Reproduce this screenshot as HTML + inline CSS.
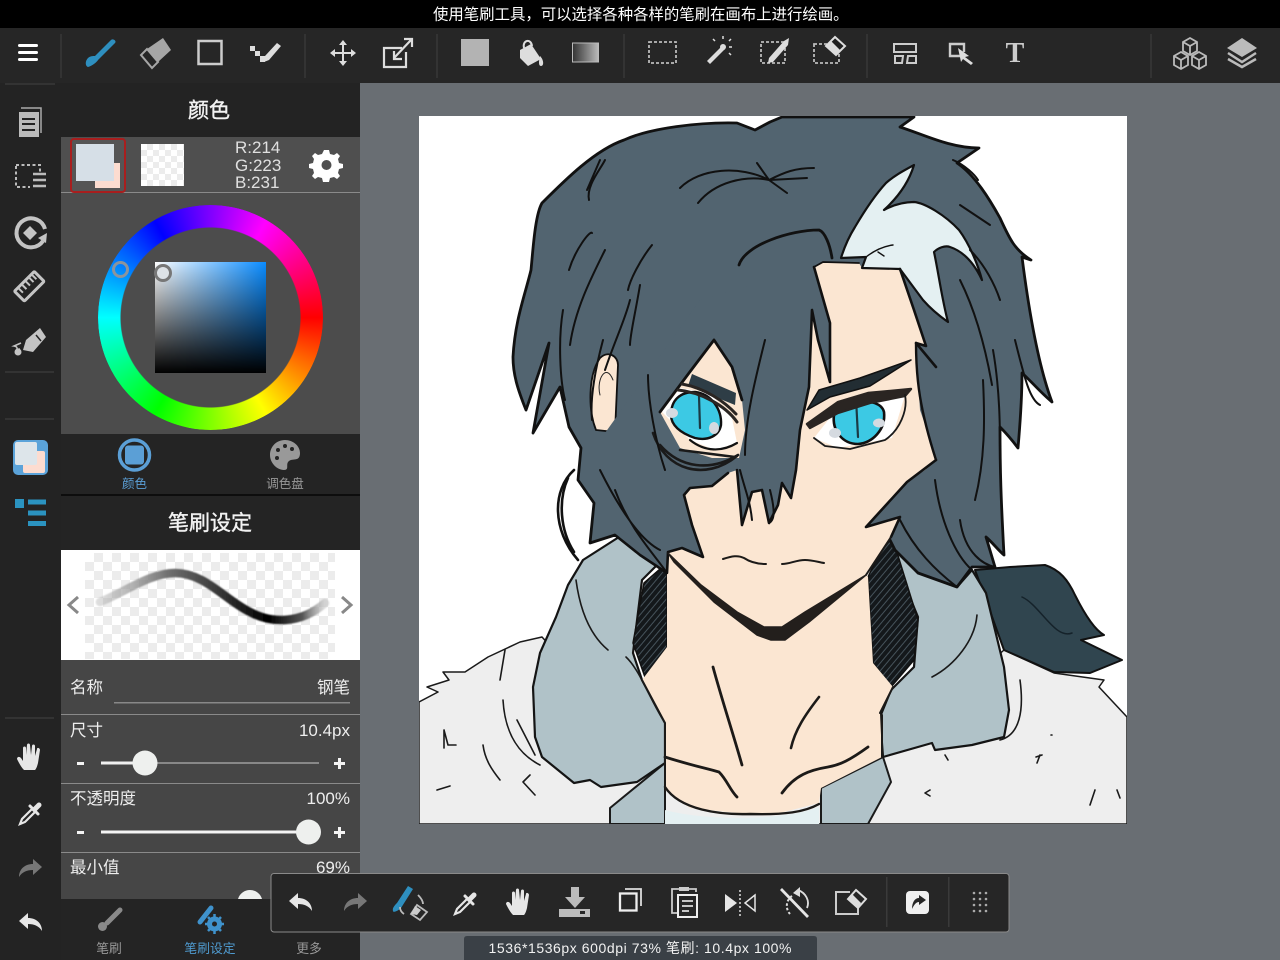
<!DOCTYPE html>
<html lang="zh">
<head>
<meta charset="utf-8">
<title>MediBang</title>
<style>
html,body{margin:0;padding:0;background:#686d72}
body{width:1280px;height:960px;overflow:hidden;position:relative;font-family:"Liberation Sans","Noto Sans CJK SC",sans-serif}
.a{position:absolute}
.check{background-color:#fff;background-image:linear-gradient(45deg,#ececec 25%,transparent 25%,transparent 75%,#ececec 75%),linear-gradient(45deg,#ececec 25%,transparent 25%,transparent 75%,#ececec 75%);background-size:18px 18px;background-position:0 0,9px 9px}
svg{position:absolute;left:0;top:0}
</style>
</head>
<body>
<div class="a" style="left:0;top:0;width:1280px;height:28px;background:#000"></div>
<div class="a" style="left:0;top:28px;width:1280px;height:55px;background:#262626"></div>
<div class="a" style="left:0;top:83px;width:61px;height:877px;background:#232323"></div>
<div class="a" style="left:360px;top:83px;width:920px;height:877px;background:#696e73"></div>

<div class="a" style="left:61px;top:83px;width:299px;height:54px;background:#232323"></div>
<div class="a" style="left:61px;top:137px;width:299px;height:55px;background:#4f4f4f"></div>
<div class="a" style="left:61px;top:192px;width:299px;height:1px;background:#8a8a8a"></div>
<div class="a" style="left:61px;top:193px;width:299px;height:241px;background:#4c4c4c"></div>
<div class="a" style="left:61px;top:434px;width:299px;height:60px;background:#242424"></div>
<div class="a" style="left:61px;top:494px;width:299px;height:2px;background:#0d0d0d"></div>
<div class="a" style="left:61px;top:496px;width:299px;height:54px;background:#242424"></div>
<div class="a" style="left:61px;top:550px;width:299px;height:110px;background:#fff"></div>
<div class="a check" style="left:85px;top:553px;width:250px;height:106px"></div>
<div class="a" style="left:61px;top:660px;width:299px;height:239px;background:#464646"></div>
<div class="a" style="left:61px;top:899px;width:299px;height:61px;background:#242424"></div>

<div class="a" style="left:97.5px;top:205px;width:225px;height:225px;border-radius:50%;background:conic-gradient(from 90deg,#f00,#ff0,#0f0,#0ff,#00f,#f0f,#f00);-webkit-mask:radial-gradient(circle,transparent 89.5px,#000 90.5px);mask:radial-gradient(circle,transparent 89.5px,#000 90.5px)"></div>
<div class="a" style="left:155px;top:262px;width:111px;height:111px;background:linear-gradient(to top,#000,rgba(0,0,0,0)),linear-gradient(to right,#fff,#0a8cff)"></div>
<div class="a" style="left:112px;top:261px;width:11px;height:11px;border:3px solid #8c949c;border-radius:50%"></div>
<div class="a" style="left:154px;top:264px;width:12px;height:12px;border:3.5px solid #777;border-radius:50%;background:#dde2e6"></div>

<div class="a check" style="left:141px;top:144px;width:43px;height:42px;background-size:12px 12px;background-position:0 0,6px 6px"></div>
<div class="a" style="left:70px;top:138px;width:52px;height:51px;border:2.5px solid #a81e1e;border-radius:4px;background:#555"></div>
<div class="a" style="left:95px;top:163px;width:25px;height:25px;background:#fcdcd0"></div>
<div class="a" style="left:76px;top:144px;width:38px;height:37px;background:#d6dfe7"></div>

<svg width="1280" height="960" viewBox="0 0 1280 960">
<defs>
<clipPath id="cv"><rect x="419" y="116" width="708" height="708"/></clipPath>
<pattern id="hatch" width="5" height="5" patternUnits="userSpaceOnUse" patternTransform="rotate(-50)"><rect width="5" height="5" fill="#14181b"/><rect width="5" height="1" fill="#46535b"/></pattern>
<linearGradient id="stroke" x1="100" x2="325" y1="0" y2="0" gradientUnits="userSpaceOnUse"><stop offset="0" stop-color="#aaa" stop-opacity=".4"/><stop offset=".3" stop-color="#707070"/><stop offset=".75" stop-color="#000"/><stop offset=".9" stop-color="#555"/><stop offset="1" stop-color="#bbb" stop-opacity=".5"/></linearGradient>
<filter id="soft" x="-10%" y="-30%" width="120%" height="160%"><feGaussianBlur stdDeviation="0.8"/></filter>
</defs>
<rect x="419" y="116" width="708" height="708" fill="#fff"/>
<g clip-path="url(#cv)" stroke-linejoin="round" stroke-linecap="round">
<!-- fur -->
<path d="M419 702L438 692 427 687 449 680 443 672 465 672 488 657 520 642 542 637 600 700 700 800 880 760 1004 650 1054 673 1104 680 1099 687 1127 717V824H419Z" fill="#eeeeee" stroke="#1a1a1a" stroke-width="1.5"/>
<!-- back dark hair -->
<path d="M975 570L1010 567 1045 565C1060 570 1068 580 1075 595 1085 615 1095 630 1104 635L1081 640 1122 660 1090 673 1054 672 1004 650 986 600Z" fill="#30454f" stroke="#111" stroke-width="2"/>
<path d="M1022 597C1040 605 1055 640 1072 633" fill="none" stroke="#15222a" stroke-width="1.5"/>
<!-- coat pieces -->
<path d="M665 763L610 808V824H665Z" fill="#b0c2c8" stroke="#1a1a1a" stroke-width="2"/>
<path d="M883 757L821 788V824H868L891 782Z" fill="#b0c2c8" stroke="#1a1a1a" stroke-width="2"/>
<path d="M665 810C700 820 780 822 819 807V824H665Z" fill="#e4f0f2"/>
<!-- collars -->
<path d="M619 537L583 560 568 585 556 617 540 653 533 687 535 737 542 757 574 783 590 780 601 787 637 782 665 763V723L642 680 633 653 642 580 665 557Z" fill="#b0c2c8" stroke="#141414" stroke-width="2.2"/>
<path d="M880 525L918 617 914 667 891 690 880 717 883 757 932 743 935 750 972 745 1004 737 1009 710 1004 667 986 593 972 570 957 587Z" fill="#b0c2c8" stroke="#141414" stroke-width="2.2"/>
<!-- hatching -->
<path d="M667 563L644 583 633 643 646 680 667 647Z" fill="url(#hatch)" stroke="#111" stroke-width="1.5"/>
<path d="M890 530L868 577 873 663 891 687 914 660 918 620Z" fill="url(#hatch)" stroke="#111" stroke-width="1.5"/>
<!-- left thin lock -->
<path d="M574 470C552 490 552 530 578 560M568 478C558 500 560 530 574 552" fill="#fff" stroke="#111" stroke-width="2.6"/>
<!-- hair silhouette -->
<path d="M755 130L770 122 782 117H914L900 127C925 135 950 148 979 148L957 163C975 175 990 200 1000 218 1010 240 1015 250 1031 260L1022 257C1030 320 1040 370 1052 402 1040 392 1030 380 1022 373 1022 400 1020 425 1018 448 1012 440 1005 432 1000 427 1000 470 1001 500 1004 555 998 550 992 542 986 537L995 567 972 567 957 587 918 573 895 550 885 530 700 530 650 555 615 535 590 543 594 503 578 480 581 448 569 427 560 387 533 433 549 343 526 410C518 390 513 375 513 357 515 320 525 295 531 270 533 250 535 215 542 203 565 180 595 150 624 140 650 128 700 122 737 123Z" fill="#526470" stroke="#111" stroke-width="2.8"/>
<!-- ear -->
<path d="M596 430C588 410 588 375 600 358 608 350 618 356 618 365L615 432Z" fill="#fbe6d2" stroke="#111" stroke-width="1.8"/>
<path d="M600 395C596 380 606 362 613 380" fill="none" stroke="#222" stroke-width="1"/>
<!-- skin -->
<path d="M814 267L823 262 859 263 862 268 900 269 914 310 926 346 916 343 918 380 920 410 932 445 936 460 925 470 907 482 880 510 866 527 900 517 891 537 866 573 868 577 873 663 893 687 880 713 882 757 821 788 819 803 780 813 737 813 690 808 665 790V723L642 680 667 647 667 563 660 520 665 470 700 400Z" fill="#fbe6d2"/>
<!-- streak -->
<path d="M914 165C908 185 895 200 884 210 895 204 905 202 914 202 925 203 945 215 959 230 970 245 978 265 982 280 975 265 965 252 950 247 945 245 938 248 934 252 938 270 942 300 948 322 938 315 930 308 923 300L900 269 862 268 866 257 841 258C845 245 850 235 855 227 865 210 875 195 886 183 895 175 905 170 914 165Z" fill="#e4f0f2" stroke="#111" stroke-width="2.2"/>
<path d="M866 257C875 250 885 246 893 245M878 252l6 4" fill="none" stroke="#111" stroke-width="1.4"/>
<!-- front hair -->
<path d="M814 267L830 323 830 382 818 340 812 310 809 387 800 430 796 470 791 498 782 483 778 505 769 523 762 490 752 492 742 525 737 470 728 473 712 486 690 488 684 495 692 525 703 557 682 548 668 552 667 573 640 555 615 535 600 500 600 440 700 300Z" fill="#526470"/>
<path d="M814 267L830 323 830 382 818 340 812 310 809 387 800 430 796 470 791 498 782 483 778 505 769 523 762 490 752 492 742 525 737 470" fill="none" stroke="#111" stroke-width="2.6"/>
<path d="M728 473L712 486 690 488 684 495 692 525 703 557 682 548 668 552 667 573 640 555 615 535" fill="none" stroke="#111" stroke-width="2.6"/>
<path d="M914 310L926 346 916 343 936 367M900 269L914 310M936 460L907 482 866 527 900 517 891 537" fill="none" stroke="#111" stroke-width="2.6"/>
<path d="M916 343C916 380 920 410 936 460" fill="none" stroke="#111" stroke-width="2.4"/>
<path d="M814 267L823 262 859 263" fill="none" stroke="#111" stroke-width="1.8"/>
<!-- left eye area -->
<path d="M714 340L732 367 742 400 745 430 739 458 712 458 680 448 660 412 689 373Z" fill="#fbe6d2"/>
<path d="M714 340L689 373 660 412M714 340L732 367 742 400" fill="none" stroke="#111" stroke-width="2.8"/>
<path d="M662 412L680 388 710 393 732 418 737 443 715 450 690 440Z" fill="#fff"/>
<path d="M671 415C671 400 680 392 695 392 712 394 722 410 721 425 719 436 708 441 695 438 680 433 671 425 671 415Z" fill="#3cc9e4" stroke="#111" stroke-width="2.4"/>
<path d="M699 396L700 428" stroke="#1b3a44" stroke-width="2.2"/>
<path d="M692 374L736 393 735 405 688 386Z" fill="#2e3d46"/>
<path d="M678 390C700 392 725 405 737 422M682 384C705 388 725 402 736 414" fill="none" stroke="#2a2522" stroke-width="3"/>
<path d="M690 440C705 452 722 452 737 443" fill="none" stroke="#111" stroke-width="2.2"/>
<ellipse cx="672" cy="413" rx="6" ry="5" fill="#d5dae0"/><ellipse cx="714" cy="428" rx="5" ry="6" fill="#d5dae0"/>
<path d="M653 433C665 470 705 482 737 456M660 445C680 468 710 472 738 455M680 450L735 457" fill="none" stroke="#1a1a1a" stroke-width="2.6"/>
<!-- right eye -->
<path d="M814 438L840 405 905 395 892 438 838 448Z" fill="#fff"/>
<path d="M834 415C838 400 880 395 884 412 886 430 872 443 858 444 842 444 832 430 834 415Z" fill="#3cc9e4" stroke="#111" stroke-width="2.6"/>
<path d="M856 398L858 437" stroke="#1b3a44" stroke-width="2.2"/>
<ellipse cx="835" cy="433" rx="6" ry="5" fill="#d5dae0"/><ellipse cx="879" cy="423" rx="6" ry="4.500" fill="#d5dae0"/>
<path d="M807 424L838 402 868 393 911 389 905 396 870 403 838 413 810 428Z" fill="#2a2522" stroke="#2a2522" stroke-width="2.4"/>
<path d="M905 395C908 410 900 430 885 440L850 449 825 446 814 438" fill="none" stroke="#1a1a1a" stroke-width="1.8"/>
<path d="M807 410L819 390 860 378 911 360 870 386 830 397Z" fill="#222d33" stroke="#111" stroke-width="1.5"/>
<!-- hair lines -->
<g fill="none" stroke="#111" stroke-width="2">
<path d="M680 188C700 168 740 165 769 180M698 203C715 182 745 175 769 180M757 163L769 180M814 168C795 168 785 172 769 180M807 178L769 180M787 193L769 180" />
<path d="M739 265C745 245 790 230 819 230 825 232 830 245 832 258" stroke-width="2.8"/>
<path d="M589 200C586 186 600 170 605 160M587 190L600 160"/>
<path d="M569 270C575 250 590 230 592 233M652 245C640 260 630 280 628 290M640 285C635 315 630 335 630 345M605 250C590 280 575 310 570 345"/>
<path d="M603 340C595 370 590 400 592 420M563 310C558 340 560 380 565 400M630 300C625 320 615 340 605 370"/>
<path d="M648 375C648 400 655 440 665 470M765 340C755 380 745 420 745 455"/>
<path d="M960 205L990 225M953 160C965 165 975 175 978 180M970 250C985 265 995 285 1000 300M960 280C975 310 985 345 992 385M993 350C1000 390 1000 430 1000 450M983 380C985 420 985 460 975 500M1015 340C1025 380 1030 400 1040 405"/>
<path d="M960 520C965 555 985 565 995 567M935 480C940 520 955 555 972 570M900 520C915 550 935 570 957 587M615 490C630 530 655 555 667 573M600 470C620 510 640 540 660 550"/>
<path d="M740 470C745 490 750 500 752 520M770 490C775 510 775 520 769 523"/>
</g>
<!-- face lines -->
<g fill="none" stroke="#1c1a18" stroke-width="2">
<path d="M723 559C732 556 738 555 744 558 750 562 758 564 766 564M782 564C790 564 796 560 805 560 812 560 818 562 824 563" />
<path d="M713 667C722 700 732 730 742 765" stroke-width="2.8"/>
<path d="M819 697C805 715 795 730 791 748" stroke-width="2.6"/>
<path d="M665 757C690 765 705 768 719 772 727 780 730 790 737 797" stroke-width="2.8"/>
<path d="M868 747C850 760 840 765 828 767 810 770 795 775 782 793" stroke-width="2.8"/>
<path d="M665 787C680 810 720 815 750 814 785 815 805 812 819 804" stroke-width="2.4"/>
<path d="M665 723V790M882 715V757M642 680L665 723M893 687L880 713M866 575L891 537"/>
<path d="M668 553L674 562 714 602 757 635 771 640 785 640 809 622 866 575 805 612 782 627 764 627 737 612 701 585Z" fill="#231f1c" stroke="#231f1c" stroke-width="1.5" stroke-linejoin="round"/>
</g>
<!-- fur lines -->
<g fill="none" stroke="#1a1a1a" stroke-width="1.6">
<path d="M505 650L500 680M503 700C505 735 520 755 540 765M517 720L535 755M444 730L448 745 456 745M444 730L444 748M483 745C485 760 492 770 500 780M437 790L450 786M530 775L523 782 535 795"/>
<path d="M1020 680C1024 710 1020 735 1000 740M1051 735h1M1040 755l-3 8M1036 757l6-2M945 755l3 5M930 790l-5 3 5 3M1095 790L1090 805M1117 790L1120 798"/>
<path d="M576 580C580 610 590 635 608 650M977 615C975 640 955 665 932 677M626 657C640 670 650 700 665 723"/>
</g>
</g>

<!-- Brush preview -->
<path d="M100 602C125 592 150 573 175 573 205 573 225 600 250 612 270 623 300 625 325 603" fill="none" stroke="url(#stroke)" stroke-width="8.500" stroke-linecap="round" filter="url(#soft)"/>
<path d="M78 597L69 605 78 613M342 597L351 605 342 613" fill="none" stroke="#888" stroke-width="3"/>

<!-- Top bar separators -->
<g fill="#333"><rect x="60" y="34" width="2" height="44"/><rect x="304" y="34" width="2" height="44"/><rect x="436" y="34" width="2" height="44"/><rect x="623" y="34" width="2" height="44"/><rect x="866" y="34" width="2" height="44"/><rect x="1150" y="34" width="2" height="44"/><rect x="5" y="83" width="50" height="2"/><rect x="5" y="371" width="49" height="2"/><rect x="5" y="418" width="49" height="2"/><rect x="5" y="717" width="49" height="2"/></g>

<defs>
<g id="undo"><path d="M0 8L9 0V5C17 5 23 10 23 18 20 13 15 11 9 11V16Z"/></g>
<g id="hand"><path d="M7 27C4 24 2 20 0 16 0 14 2 13 4 15L6 18V5C6 3 9 3 9 5V12L10 2C10 0 13 0 13 2L14 12 15 3C15 1 18 1 18 3L18 13 20 6C20 4 23 5 23 7L21 20C20 24 19 26 18 27Z"/></g>
<g id="drop"><path d="M14 9L4 19 2 24 7 22 17 12Z" fill="none" stroke-width="2.200"/><path d="M12 6L20 14" fill="none" stroke-width="3" stroke-linecap="round"/><path d="M17 9L21 5" fill="none" stroke-width="5" stroke-linecap="round"/></g>
</defs>

<!-- Top toolbar icons -->
<g fill="#fff"><rect x="18" y="44" width="20" height="3" rx="1.5"/><rect x="18" y="51" width="20" height="3" rx="1.5"/><rect x="18" y="58" width="20" height="3" rx="1.5"/></g>
<path d="M111 40C113 38 117 41 115 43L98 60C97 62 92 66 88 67 85 66 85 61 88 58 90 56 93 56 95 56Z" fill="#2e8fbf"/>
<path d="M163 38L171 50 158 62 147 49Z" fill="#a6a6a6"/>
<path d="M147 49L158 62 152 68 141 55Z" fill="none" stroke="#a6a6a6" stroke-width="2"/>
<rect x="198.500" y="41" width="23" height="23" fill="none" stroke="#ccc" stroke-width="2.500"/>
<path d="M250 46h5v5h-5zM255 51h5v5h-5zM260 56h5v6h-5z" fill="#ddd"/>
<path d="M265 56L277 43 281 46 269 60 264 62Z" fill="#ddd"/>
<g fill="none" stroke="#ddd" stroke-width="2"><path d="M343 43V63M333 53H353"/></g><path d="M343 40l-4 5h8zM343 66l-4-5h8zM330 53l5-4v8zM356 53l-5-4v8z" fill="#ddd"/>
<g fill="none" stroke="#ddd" stroke-width="2.200"><path d="M402 48H384V67H406V52"/><path d="M394 58L411 40M404 39H412V47M394 51V59H402"/></g>
<rect x="461" y="39" width="28" height="27" fill="#b3b3b3"/>
<path d="M520 50L531 44 541 59 528 66 520 58Z" fill="#ddd"/><path d="M524 48C522 40 531 38 532 46" fill="none" stroke="#ddd" stroke-width="2"/><path d="M540 56C544 60 544 66 541 66 538 66 539 60 540 56Z" fill="#ddd"/>
<defs><linearGradient id="g1"><stop offset="0" stop-color="#333"/><stop offset="1" stop-color="#bbb"/></linearGradient></defs>
<rect x="572.500" y="43" width="26" height="19" fill="url(#g1)" stroke="#bbb"/>
<rect x="649" y="42" width="27" height="21" fill="none" stroke="#bbb" stroke-width="1.800" stroke-dasharray="3 2"/>
<path d="M707 61L722 46 725 49 710 64Z" fill="#ddd"/><circle cx="723" cy="47" r="3" fill="#ddd"/><path d="M723 39v-3M732 47h-3M729 41l2-2M715 41l-2-2M729 53l2 2" stroke="#ddd" stroke-width="1.500"/>
<rect x="761" y="42" width="24" height="21" fill="none" stroke="#bbb" stroke-width="1.800" stroke-dasharray="3 2"/>
<path d="M769 58L784 41 789 38 788 45 773 62 768 63Z" fill="#ddd"/>
<rect x="814" y="44" width="25" height="19" fill="none" stroke="#bbb" stroke-width="1.800" stroke-dasharray="3 2"/>
<path d="M835 37L845 46 836 55 826 46Z" fill="#1f1f1f" stroke="#ddd" stroke-width="2"/><path d="M831 41L840 50 836 55 826 46Z" fill="#ddd"/>
<rect x="894" y="44" width="22" height="8" fill="none" stroke="#ccc" stroke-width="2"/><path d="M895 56h8l-1 7h-7zM908 56h8v7h-9z" fill="none" stroke="#ccc" stroke-width="2"/>
<path d="M962 56H950V44H964V52" fill="none" stroke="#ccc" stroke-width="2.400"/><path d="M958 48L969 56 965 57 973 63 971 65 963 59 961 62Z" fill="#ddd"/>
<text x="1015" y="62" text-anchor="middle" font-family="Liberation Serif" font-weight="700" font-size="28" fill="#ccc">T</text>
<g fill="none" stroke="#bbb" stroke-width="1.800"><path d="M1190 38l7 4v9l-7 4-7-4v-9zM1183 42l7 4 7-4M1190 46v9"/><path d="M1181 52l7 4v9l-7 4-7-4v-9zM1174 56l7 4 7-4M1181 60v9"/><path d="M1199 52l7 4v9l-7 4-7-4v-9zM1192 56l7 4 7-4M1199 60v9"/></g>
<path d="M1242 38L1257 48 1242 57 1227 48Z" fill="#bbb"/><path d="M1228 53L1242 62 1256 53M1228 59L1242 67 1256 59" fill="none" stroke="#bbb" stroke-width="2.500"/>

<!-- Left rail icons -->
<path d="M21 108H41V133" fill="none" stroke="#aaa" stroke-width="1.500"/><rect x="19" y="112" width="20" height="25" fill="#bbb"/><path d="M22 119h13M22 124h13M22 130h13" stroke="#232323" stroke-width="2"/>
<rect x="16" y="165" width="24" height="22" fill="none" stroke="#bbb" stroke-width="2" stroke-dasharray="3 2.500"/><rect x="30" y="172" width="16" height="18" fill="#232323"/><path d="M33 174h13M33 180h13M33 186h13" stroke="#bbb" stroke-width="2.500"/>
<path d="M43 241A14.500 14.500 0 1 1 45 229" fill="none" stroke="#c4c4c4" stroke-width="4"/><path d="M38 238L47 233 46 243Z" fill="#c4c4c4"/><path d="M30 226L37 233 30 240 23 233Z" fill="#c4c4c4"/>
<g transform="rotate(-45 30 287)"><rect x="16" y="279" width="28" height="14" rx="1" fill="none" stroke="#c4c4c4" stroke-width="3"/><path d="M21 280v6M26 280v6M31 280v6M36 280v6M40 280v6" stroke="#c4c4c4" stroke-width="2"/></g>
<path d="M40 328L46 337 33 352 23 350 26 340Z" fill="#c4c4c4"/><path d="M36 335L41 341" stroke="#232323" stroke-width="1.500"/><path d="M21 343L14 346C20 347 14 350 20 349" fill="none" stroke="#c4c4c4" stroke-width="1.600"/><circle cx="18" cy="352" r="3.500" fill="#c4c4c4"/>
<rect x="13" y="440" width="35" height="35" rx="5" fill="#5ba3d9"/><rect x="23" y="451" width="22" height="22" rx="2" fill="#fcdcd0"/><rect x="15" y="442" width="22" height="23" rx="2" fill="#dde5ea"/>
<g fill="#2b93c0"><rect x="15" y="499" width="9" height="9"/><rect x="28" y="499.500" width="18" height="5"/><rect x="28" y="510.500" width="18" height="5"/><rect x="28" y="521" width="18" height="5"/></g>
<use href="#hand" x="17" y="743" fill="#e6e6e6"/>
<use href="#drop" x="18" y="800" stroke="#e6e6e6"/>
<g transform="translate(42 859) scale(-1 1)" fill="#777"><use href="#undo"/></g>
<use href="#undo" x="19" y="913" fill="#e6e6e6"/>

<!-- Gear -->
<path d="M324 150h5l1 4 4 1 3-2 3 3-2 3 1 4 4 1v4l-4 1-1 4 2 3-3 3-3-2-4 1-1 4h-6l-1-4-4-1-3 2-3-3 2-3-1-4-4-1v-4l4-1 1-4-2-3 3-3 3 2 4-1z" fill="#fff"/><circle cx="326.500" cy="165" r="5" fill="#4f4f4f"/>

<!-- Panel text -->
<g font-family="Liberation Sans,Noto Sans CJK SC,sans-serif">
<text x="209" y="117.500" text-anchor="middle" font-size="21" fill="#f2f2f2" stroke="#f2f2f2" stroke-width=".4">颜色</text>
<g font-size="17" fill="#e0e0e0"><text x="235" y="153">R:214</text><text x="235" y="171">G:223</text><text x="235" y="188">B:231</text></g>
<circle cx="134.500" cy="455" r="15" fill="none" stroke="#5b9fd6" stroke-width="3.500"/><rect x="125" y="445.500" width="19" height="19" rx="3" fill="#5b9fd6"/>
<text x="134.500" y="488" text-anchor="middle" font-size="12.500" fill="#5b9fd6">颜色</text>
<path d="M285 440C276 440 270 447 270 455 270 463 277 470 284 470 290 470 285 464 289 461 293 458 300 462 300 453 300 446 293 440 285 440Z" fill="#999"/><g fill="#242424"><circle cx="278" cy="450" r="2"/><circle cx="285" cy="446" r="2"/><circle cx="292" cy="449" r="2"/><circle cx="277" cy="458" r="2"/></g>
<text x="285" y="488" text-anchor="middle" font-size="12.500" fill="#999">调色盘</text>
<text x="210" y="530" text-anchor="middle" font-size="21" fill="#f2f2f2" stroke="#f2f2f2" stroke-width=".4">笔刷设定</text>

<g font-size="16.500" fill="#eee">
<text x="70" y="693">名称</text><text x="350" y="693" text-anchor="end">钢笔</text>
<text x="70" y="736">尺寸</text><text x="350" y="736" text-anchor="end" font-size="17">10.4px</text>
<text x="70" y="804">不透明度</text><text x="350" y="804" text-anchor="end" font-size="17">100%</text>
<text x="70" y="873">最小值</text><text x="350" y="873" text-anchor="end" font-size="17">69%</text>
</g>
<rect x="114" y="702" width="236" height="1.500" fill="#888"/>
<rect x="61" y="714" width="299" height="1" fill="#8a8a8a"/><rect x="61" y="783" width="299" height="1" fill="#8a8a8a"/><rect x="61" y="852" width="299" height="1" fill="#8a8a8a"/>
<rect x="101" y="762" width="218" height="2" fill="#888"/><rect x="101" y="761.500" width="44" height="3" fill="#f0f0f0"/>
<circle cx="145" cy="763" r="12.500" fill="#eef0ee"/>
<rect x="101" y="830.500" width="208" height="3" fill="#f4f4f4"/><circle cx="308.500" cy="832" r="12.500" fill="#eef0ee"/>
<g fill="#f4f4f4"><rect x="77" y="762" width="7" height="3"/><rect x="77" y="831" width="7" height="3"/><rect x="334" y="762" width="11" height="3"/><rect x="338" y="758" width="3" height="11"/><rect x="334" y="831" width="11" height="3"/><rect x="338" y="827" width="3" height="11"/></g>
<path d="M238 899A12.500 12.500 0 0 1 262 899Z" fill="#eef0ee"/>

<path d="M120 910L107 923" stroke="#8a8a8a" stroke-width="5" stroke-linecap="round"/><circle cx="102.500" cy="926.500" r="4.500" fill="#8a8a8a"/>
<text x="109" y="953" text-anchor="middle" font-size="12.800" fill="#999">笔刷</text>
<path d="M200 922L211 908" stroke="#3f92cc" stroke-width="5" stroke-linecap="round"/><circle cx="214.500" cy="924" r="7.500" fill="#3f92cc"/><path d="M214.500 914v20M205 924h19M208 917l13 14M221 917l-13 14" stroke="#3f92cc" stroke-width="2.500"/><circle cx="214.500" cy="924" r="2.500" fill="#242424"/>
<text x="210" y="953" text-anchor="middle" font-size="12.800" fill="#4f9bd0">笔刷设定</text>
<text x="309" y="953" text-anchor="middle" font-size="12.800" fill="#999">更多</text>

<!-- Status bar text -->
<text x="433" y="19.500" font-size="15.400" fill="#fff">使用笔刷工具，可以选择各种各样的笔刷在画布上进行绘画。</text>

<!-- Floating toolbar -->
<rect x="271" y="873.500" width="738" height="58.500" rx="3" fill="#262626" stroke="#8a8a8a"/>
<rect x="886" y="877" width="1.500" height="50" fill="#3a3a3a"/><rect x="948" y="877" width="1.500" height="50" fill="#3a3a3a"/>
<use href="#undo" x="289" y="893" fill="#e6e6e6"/>
<g transform="translate(367 893) scale(-1 1)" fill="#777"><use href="#undo"/></g>
<path d="M408 886L413 889 401 908C398 911 393 913 393 911 392 908 395 905 397 903Z" fill="#2e8fbf"/>
<path d="M418 895C421 898 423 901 423 904M404 914C401 912 400 910 400 907M417 905L427 912 420 920 411 914Z" fill="none" stroke="#bbb" stroke-width="1.800"/><path d="M415 906L421 910 417 915 411 914Z" fill="#ccc"/>
<use href="#drop" x="453" y="890" stroke="#e6e6e6"/>
<use href="#hand" x="506" y="888" fill="#e6e6e6"/>
<path d="M571 887h8v10h6l-10 11-10-11h6z" fill="#bbb"/><rect x="559" y="909" width="31" height="8" fill="#bbb"/><rect x="580" y="911" width="5" height="3" fill="#262626"/>
<rect x="620" y="893.500" width="16.500" height="17" fill="none" stroke="#eee" stroke-width="2.300"/><path d="M625 889H641V906" fill="none" stroke="#ddd" stroke-width="1.800"/>
<path d="M677 913H672V889H681M687 889H696V892" fill="none" stroke="#ccc" stroke-width="1.800"/><rect x="679" y="887" width="10" height="4" fill="#ccc"/><rect x="678" y="895" width="19" height="22" fill="none" stroke="#eee" stroke-width="2"/><path d="M682 901h11M682 906h11M682 911h7" stroke="#ddd" stroke-width="1.800"/>
<path d="M725 894L737 903 725 912Z" fill="#e6e6e6"/><path d="M755 895L745 903 755 911Z" fill="none" stroke="#e6e6e6" stroke-width="1.500"/><path d="M740 890V916" stroke="#ddd" stroke-width="1.500" stroke-dasharray="2 2"/>
<path d="M781 889L808 917" stroke="#e6e6e6" stroke-width="2.800"/><path d="M798 890C806 893 810 901 807 908" fill="none" stroke="#ddd" stroke-width="1.800"/><path d="M792 896A12 12 0 0 0 790 914" fill="none" stroke="#ddd" stroke-width="2" stroke-dasharray="2.500 2"/><path d="M793 893L800 887V897Z" fill="#ddd"/>
<path d="M850 892H836V914H858V904" fill="none" stroke="#ccc" stroke-width="2"/><path d="M856 890L866 899 858 908 848 899Z" fill="#262626" stroke="#ddd" stroke-width="2"/><path d="M852 894L861 903 858 908 848 899Z" fill="#ddd"/>
<rect x="906" y="891" width="23" height="23" rx="4" fill="#f0f0f0"/><path d="M912 909C912 902 915 898 919 898V895L926 900 919 905V902C916 902 914 905 912 909Z" fill="#262626"/>
<g fill="#aaa"><circle cx="974" cy="893" r="1.300"/><circle cx="980" cy="893" r="1.300"/><circle cx="986" cy="893" r="1.300"/><circle cx="974" cy="899" r="1.300"/><circle cx="980" cy="899" r="1.300"/><circle cx="986" cy="899" r="1.300"/><circle cx="974" cy="905" r="1.300"/><circle cx="980" cy="905" r="1.300"/><circle cx="986" cy="905" r="1.300"/><circle cx="974" cy="911" r="1.300"/><circle cx="980" cy="911" r="1.300"/><circle cx="986" cy="911" r="1.300"/></g>

<!-- Info bar -->
<path d="M464 960V939Q464 936 467 936H814Q817 936 817 939V960Z" fill="#3a4046"/>
<text x="640" y="953" text-anchor="middle" font-size="14" fill="#f2f2f2" textLength="303">1536*1536px 600dpi 73% 笔刷: 10.4px 100%</text>
</g>
</svg>
</body>
</html>
